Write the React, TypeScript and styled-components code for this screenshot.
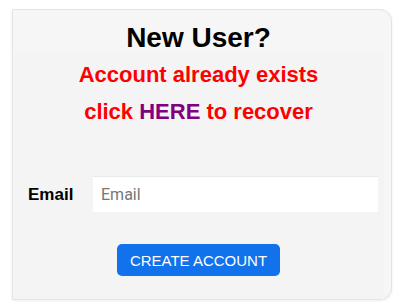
import React from "react";
import styled, { createGlobalStyle } from "styled-components";

const Global = createGlobalStyle`
  html, body { margin: 0; padding: 0; background: #ffffff; }
  body { font-family: "Liberation Sans", Arial, sans-serif; }
`;

const Page = styled.div`
  width: 400px;
  height: 305px;
  padding: 9px 8px 0 12px;
  box-sizing: border-box;
`;

const Card = styled.div`
  box-sizing: border-box;
  width: 380px;
  height: 291px;
  background: #f6f6f6;
  border: 1px solid #e4e4e4;
  border-radius: 0 12px 12px 0;
  box-shadow: 0 1px 3px rgba(0, 0, 0, 0.07);
  padding: 12px 7px 0 0;
  display: flex;
  flex-direction: column;
`;

const Title = styled.h2`
  margin: 0;
  height: 31px;
  text-align: center;
  font-size: 28px;
  line-height: 32px;
  font-weight: 700;
  color: #000;
`;

const Body = styled.div`
  flex: 1;
  background: #f4f4f4;
  padding-top: 3px;
  display: flex;
  flex-direction: column;
`;

const Message = styled.div`
  text-align: center;
  font-size: 22px;
  line-height: 37px;
  font-weight: 700;
  color: #ff0000;
`;

const Link = styled.span`
  color: #800080;
  cursor: pointer;
`;

const Row = styled.div`
  display: flex;
  align-items: center;
  margin-top: 46px;
  padding: 0 6px 0 15px;
  gap: 20px;
`;

const Label = styled.label`
  font-size: 17px;
  font-weight: 700;
  color: #000;
  line-height: 19px;
  width: 45px;
`;

const Input = styled.input`
  flex: 1;
  height: 36px;
  box-sizing: border-box;
  border: none;
  border-top: 1px solid #e9e9e9;
  background: #ffffff;
  padding: 0 8px;
  font-family: Roboto, "Liberation Sans", sans-serif;
  font-size: 16px;
  color: #222;
  outline: none;
  &::placeholder { color: #767676; }
`;

const Actions = styled.div`
  display: flex;
  justify-content: center;
  margin-top: 32px;
`;

const Button = styled.button`
  height: 32px;
  width: 163px;
  border: none;
  border-radius: 5px;
  background: #1172ec;
  color: #ffffff;
  font-family: "Liberation Sans", Arial, sans-serif;
  font-size: 15px;
  padding: 0;
  cursor: pointer;
`;

export default function App() {
  return (
    <>
      <Global />
      <Page>
        <Card>
          <Title>New User?</Title>
          <Body>
            <Message>Account already exists</Message>
            <Message>
              click <Link>HERE</Link> to recover
            </Message>
            <Row>
              <Label>Email</Label>
              <Input placeholder="Email" />
            </Row>
            <Actions>
              <Button>CREATE ACCOUNT</Button>
            </Actions>
          </Body>
        </Card>
      </Page>
    </>
  );
}
